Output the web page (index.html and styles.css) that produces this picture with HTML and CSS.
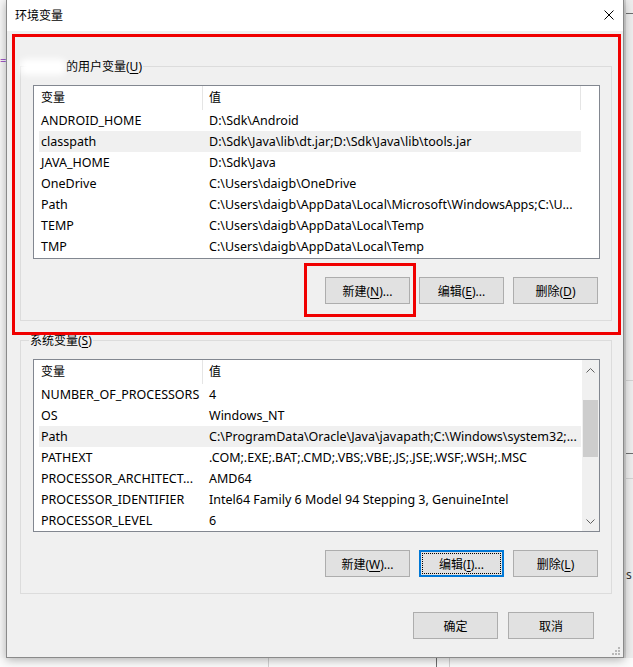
FILE: index.html
```html
<!DOCTYPE html>
<html lang="zh-CN">
<head>
    <meta charset="UTF-8">
    <meta name="viewport" content="width=device-width, initial-scale=1.0">
    <title>环境变量</title>
    <link rel="stylesheet" href="styles.css">
</head>
<body>
    <!-- janelas atrás do diálogo -->
    <div class="desk desk-right">
        <div class="desk-hline" style="top: 13px;"></div>
        <div class="desk-hline light" style="top: 380px;"></div>
        <div class="desk-hline" style="top: 453px;"></div>
        <div class="desk-hline light" style="top: 478px;"></div>
        <span class="desk-letter">s</span>
    </div>
    <div class="desk desk-bottom">
        <div class="desk-vline light" style="left: 268px;"></div>
        <div class="desk-vline" style="left: 436px;"></div>
        <div class="desk-vline light" style="left: 449px;"></div>
    </div>
    <span class="desk-mark">=</span>

    <div class="dialog">
        <div class="titlebar">
            <span class="title">环境变量</span>
            <svg class="close" width="10" height="10" viewBox="0 0 10 10">
                <path d="M0.5 0.5L9.5 9.5M9.5 0.5L0.5 9.5" stroke="#000" stroke-width="1"/>
            </svg>
        </div>

        <div class="content">
            <fieldset class="group group-user">
                <legend><span class="blur"></span>的用户变量(<u>U</u>)</legend>
                <div class="list">
                    <div class="list-main">
                        <div class="list-head">
                            <div class="head-name">变量</div>
                            <div class="head-value">值</div>
                        </div>
                        <div class="row"><div class="cell-name">ANDROID_HOME</div><div class="cell-value">D:\Sdk\Android</div></div>
                        <div class="row hot"><div class="cell-name">classpath</div><div class="cell-value">D:\Sdk\Java\lib\dt.jar;D:\Sdk\Java\lib\tools.jar</div></div>
                        <div class="row"><div class="cell-name">JAVA_HOME</div><div class="cell-value">D:\Sdk\Java</div></div>
                        <div class="row"><div class="cell-name">OneDrive</div><div class="cell-value">C:\Users\daigb\OneDrive</div></div>
                        <div class="row"><div class="cell-name">Path</div><div class="cell-value">C:\Users\daigb\AppData\Local\Microsoft\WindowsApps;C:\U...</div></div>
                        <div class="row"><div class="cell-name">TEMP</div><div class="cell-value">C:\Users\daigb\AppData\Local\Temp</div></div>
                        <div class="row"><div class="cell-name">TMP</div><div class="cell-value">C:\Users\daigb\AppData\Local\Temp</div></div>
                    </div>
                </div>
                <div class="buttons">
                    <button>新建(<u>N</u>)...</button>
                    <button>编辑(<u>E</u>)...</button>
                    <button>删除(<u>D</u>)</button>
                </div>
            </fieldset>

            <fieldset class="group group-system">
                <legend>系统变量(<u>S</u>)</legend>
                <div class="list list-system">
                    <div class="list-main">
                        <div class="list-head">
                            <div class="head-name">变量</div>
                            <div class="head-value">值</div>
                        </div>
                        <div class="row"><div class="cell-name">NUMBER_OF_PROCESSORS</div><div class="cell-value">4</div></div>
                        <div class="row"><div class="cell-name">OS</div><div class="cell-value">Windows_NT</div></div>
                        <div class="row hot"><div class="cell-name">Path</div><div class="cell-value">C:\ProgramData\Oracle\Java\javapath;C:\Windows\system32;...</div></div>
                        <div class="row"><div class="cell-name">PATHEXT</div><div class="cell-value">.COM;.EXE;.BAT;.CMD;.VBS;.VBE;.JS;.JSE;.WSF;.WSH;.MSC</div></div>
                        <div class="row"><div class="cell-name">PROCESSOR_ARCHITECT...</div><div class="cell-value">AMD64</div></div>
                        <div class="row"><div class="cell-name">PROCESSOR_IDENTIFIER</div><div class="cell-value">Intel64 Family 6 Model 94 Stepping 3, GenuineIntel</div></div>
                        <div class="row"><div class="cell-name">PROCESSOR_LEVEL</div><div class="cell-value">6</div></div>
                    </div>
                    <div class="scrollbar">
                        <div class="arrow">
                            <svg width="9" height="5" viewBox="0 0 9 5"><path d="M0.5 4.5L4.5 0.5L8.5 4.5" fill="none" stroke="#606060"/></svg>
                        </div>
                        <div class="track"><div class="thumb"></div></div>
                        <div class="arrow">
                            <svg width="9" height="5" viewBox="0 0 9 5"><path d="M0.5 0.5L4.5 4.5L8.5 0.5" fill="none" stroke="#606060"/></svg>
                        </div>
                    </div>
                </div>
                <div class="buttons">
                    <button>新建(<u>W</u>)...</button>
                    <button class="focused">编辑(<u>I</u>)...</button>
                    <button>删除(<u>L</u>)</button>
                </div>
            </fieldset>

            <div class="footer">
                <button>确定</button>
                <button class="wide">取消</button>
            </div>
        </div>

        <svg class="grip" width="9" height="9" viewBox="0 0 9 9">
            <rect x="7" y="1" width="2" height="2" fill="#b8b8b8"/>
            <rect x="4" y="4" width="2" height="2" fill="#b8b8b8"/>
            <rect x="7" y="4" width="2" height="2" fill="#b8b8b8"/>
            <rect x="1" y="7" width="2" height="2" fill="#b8b8b8"/>
            <rect x="4" y="7" width="2" height="2" fill="#b8b8b8"/>
            <rect x="7" y="7" width="2" height="2" fill="#b8b8b8"/>
        </svg>
    </div>

    <!-- marcações vermelhas -->
    <div class="mark mark-big"></div>
    <div class="mark mark-small"></div>
</body>
</html>
```

FILE: styles.css
```css
* {
    box-sizing: border-box;
}
html, body {
    margin: 0;
}
body {
    position: relative;
    width: 633px;
    height: 667px;
    overflow: hidden;
    background-color: #f7f7f7;
    font-family: "Noto Sans", "Noto Sans CJK SC", sans-serif;
    font-size: 12px;
    color: #000;
}
u {
    text-decoration-thickness: 1px;
    text-underline-offset: 2px;
}

/* fundo */
.desk {
    position: absolute;
}
.desk-right {
    left: 624px;
    top: 0;
    width: 9px;
    height: 667px;
    background-color: #ededed;
    border-left: 2px solid #d6d6d6;
}
.desk-bottom {
    left: 0;
    top: 658px;
    width: 633px;
    height: 9px;
    background-color: #fbfbfb;
}
.desk-hline {
    position: absolute;
    left: 0;
    width: 100%;
    height: 1px;
    background-color: #6e6e6e;
}
.desk-vline {
    position: absolute;
    top: 0;
    width: 1px;
    height: 100%;
    background-color: #6e6e6e;
}
.desk-hline.light, .desk-vline.light {
    background-color: #d2d2d2;
}
.desk-letter {
    position: absolute;
    left: 0;
    top: 566px;
    font-size: 12px;
    color: #333;
}
.desk-mark {
    position: absolute;
    left: 0;
    top: 52px;
    font-size: 11px;
    color: #a05ac8;
}

/* janela */
.dialog {
    position: absolute;
    left: 6px;
    top: 0;
    width: 618px;
    height: 658px;
    background-color: #f0f0f0;
    border: 1px solid #8a8a8a;
    border-top: none;
    box-shadow: 0 2px 9px rgba(0, 0, 0, 0.3);
    display: flex;
    flex-direction: column;
}
.titlebar {
    height: 31px;
    flex-shrink: 0;
    background-color: #fff;
    display: flex;
    align-items: center;
    justify-content: space-between;
    padding: 0 9px 1px 8px;
}
.close {
    display: block;
}
.content {
    padding: 27px 11px 0 13px;
}

/* grupos */
.group {
    margin: 0;
    min-width: 0;
    border: 1px solid #dcdcdc;
    padding: 10px 11px 16px 12px;
}
.group legend {
    padding: 0 1px;
    margin-left: -4px;
    line-height: 17px;
    height: 17px;
}
.group-system {
    margin-top: 11px;
    padding-top: 10px;
}
.blur {
    display: inline-block;
    width: 46px;
    height: 16px;
    margin-left: -10px;
    vertical-align: -4px;
    background-color: #fff;
    border-radius: 6px;
    filter: blur(3px);
}

/* listas */
.list {
    height: 174px;
    background-color: #fff;
    border: 1px solid #828790;
    overflow: hidden;
    display: flex;
}
.list-system {
    height: 173px;
}
.list-main {
    flex: 1;
    min-width: 0;
}
.list-head {
    height: 24px;
    display: flex;
}
.head-name {
    width: 169px;
    padding-left: 7px;
    line-height: 24px;
    border-right: 1px solid #e5e5e5;
}
.head-value {
    width: 378px;
    padding-left: 6px;
    line-height: 24px;
    border-right: 1px solid #e5e5e5;
}
.list-system .head-value {
    border-right: none;
}
.row {
    height: 21px;
    width: 542px;
    margin-left: 5px;
    display: flex;
    line-height: 21px;
    white-space: nowrap;
    font-size: 12.5px;
}
.row.hot {
    background-color: #f0f0f0;
}
.cell-name {
    width: 163px;
    padding-left: 2px;
    overflow: hidden;
}
.cell-value {
    flex: 1;
    padding-left: 7px;
    overflow: hidden;
}

/* barra de rolagem */
.scrollbar {
    width: 17px;
    background-color: #f0f0f0;
    display: flex;
    flex-direction: column;
}
.arrow {
    height: 20px;
    display: flex;
    align-items: center;
    justify-content: center;
}
.arrow svg {
    display: block;
}
.track {
    flex: 1;
    padding: 20px 1px 0 1px;
}
.thumb {
    height: 57px;
    background-color: #cdcdcd;
}

/* botões */
.buttons {
    margin-top: 18px;
    padding-right: 2px;
    display: flex;
    justify-content: flex-end;
    gap: 9px;
}
button {
    width: 85px;
    height: 27px;
    padding: 0;
    background-color: #e1e1e1;
    border: 1px solid #adadad;
    font-family: "Noto Sans", "Noto Sans CJK SC", sans-serif;
    font-size: 12px;
    color: #000;
}
button.focused {
    border-color: #0078d7;
    box-shadow: inset 0 0 0 1px #0078d7;
    outline: 1px dotted #000;
    outline-offset: -4px;
}
.footer {
    margin-top: 18px;
    padding-right: 18px;
    display: flex;
    justify-content: flex-end;
    gap: 10px;
}
button.wide {
    width: 86px;
}
.grip {
    position: absolute;
    right: 3px;
    bottom: 2px;
}

/* marcações */
.mark {
    position: absolute;
    border: 3px solid #f00000;
}
.mark-big {
    left: 12px;
    top: 34px;
    width: 609px;
    height: 301px;
}
.mark-small {
    left: 304px;
    top: 263px;
    width: 112px;
    height: 54px;
}
```
